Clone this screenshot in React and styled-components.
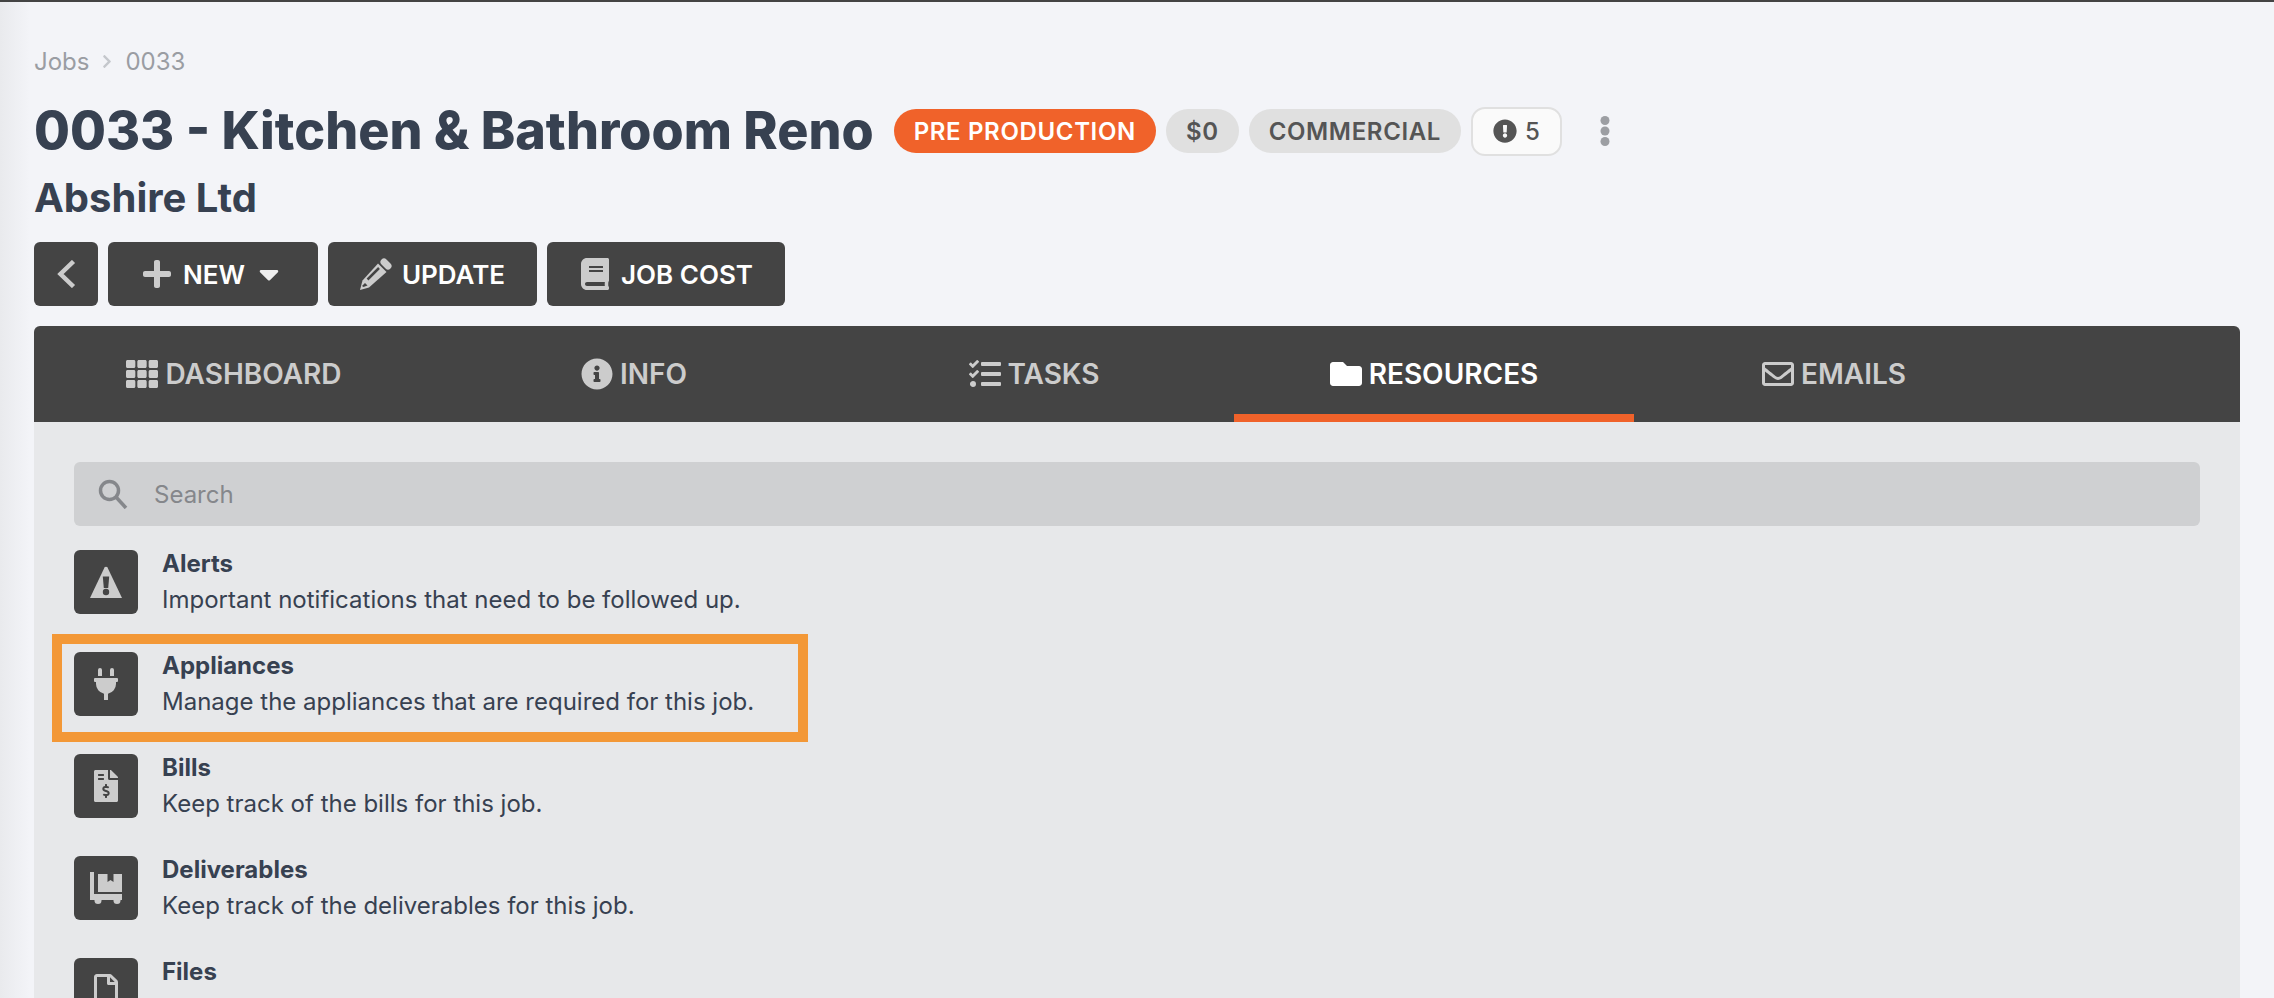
import React from 'react';
import styled, { createGlobalStyle } from 'styled-components';
import {
  FaBook,
  FaCaretDown,
  FaChevronRight,
  FaExclamationCircle,
  FaFileInvoiceDollar,
  FaFolder,
  FaInfoCircle,
  FaPlug,
  FaPlus,
  FaRegEnvelope,
  FaRegFile,
  FaTasks,
  FaTh,
} from 'react-icons/fa';

const GlobalStyle = createGlobalStyle`
  html, body {
    margin: 0;
    padding: 0;
    height: 100%;
    overflow: hidden;
    font-family: Inter, "Liberation Sans", sans-serif;
  }
  * {
    box-sizing: border-box;
  }
`;

const Page = styled.div`
  height: 100vh;
  overflow: hidden;
  border-top: 2px solid #444;
  padding: 0 34px;
  background: linear-gradient(90deg, #e9eaed 0, #f3f4f8 30px) #f3f4f8;
`;

const Breadcrumbs = styled.nav`
  display: flex;
  align-items: center;
  gap: 12px;
  height: 34px;
  margin-top: 42px;
  font-size: 24px;
  color: #9a9da3;

  svg {
    width: 12px;
    height: 15px;
    color: #c4c7cc;
  }
`;

const TitleRow = styled.div`
  display: flex;
  align-items: center;
  margin-top: 22px;
  height: 62px;
`;

const Title = styled.h1`
  margin: 0 20px 0 0;
  font-size: 52px;
  line-height: 62px;
  font-weight: 800;
  color: #374151;
  white-space: nowrap;
`;

const Pill = styled.span`
  display: inline-flex;
  align-items: center;
  height: 44px;
  padding: 0 20px;
  margin-right: 10px;
  border-radius: 22px;
  font-size: 24px;
  font-weight: 600;
  letter-spacing: 0.65px;
  white-space: nowrap;
  color: ${p => (p.$accent ? '#fff' : '#555')};
  background: ${p => (p.$accent ? '#f0622a' : '#e0e0e0')};
`;

const CountPill = styled.span`
  display: inline-flex;
  align-items: center;
  gap: 8px;
  height: 49px;
  padding: 0 20px 0 20px;
  border: 2px solid #e0e0e0;
  border-radius: 14px;
  background: #fafafa;
  font-size: 24px;
  font-weight: 500;
  color: #555;

  svg {
    width: 24px;
    height: 24px;
  }
`;

const MoreButton = styled.span`
  display: flex;
  margin-left: 38px;
  color: #9c9ea3;
`;

const Subtitle = styled.h2`
  margin: 12px 0 0;
  font-size: 40px;
  line-height: 48px;
  font-weight: 700;
  color: #374151;
`;

const Toolbar = styled.div`
  display: flex;
  gap: 10px;
  margin-top: 20px;
`;

const ToolButton = styled.button`
  display: flex;
  align-items: center;
  justify-content: center;
  gap: 10px;
  width: ${p => p.$width}px;
  height: 64px;
  padding: 0;
  border: none;
  border-radius: 6px;
  background: #444;
  color: #fff;
  font-family: inherit;
  font-size: 26px;
  font-weight: 600;

  svg {
    color: #ccc;
    width: 32px;
    height: 32px;
  }

  svg.caret {
    width: 20px;
    height: 32px;
    margin: 0 6px 0 4px;
    color: #eee;
  }

  svg.back {
    width: 19px;
    height: 28px;
  }
`;

const Panel = styled.section`
  margin-top: 20px;
  background: #e7e8ea;
  border-radius: 6px 6px 0 0;
`;

const Tabs = styled.div`
  display: flex;
  height: 96px;
  background: #444;
  border-radius: 6px 6px 0 0;
`;

const Tab = styled.div`
  display: flex;
  align-items: center;
  justify-content: center;
  gap: 7px;
  width: 400px;
  box-shadow: ${p => (p.$active ? 'inset 0 -8px 0 #f0622a' : 'none')};
  font-size: 28px;
  font-weight: 600;
  color: ${p => (p.$active ? '#fff' : '#ccc')};

  svg {
    width: 32px;
    height: 32px;
  }
`;

const PanelBody = styled.div`
  padding: 40px 40px 0;
`;

const SearchBox = styled.div`
  display: flex;
  align-items: center;
  gap: 26px;
  height: 64px;
  padding-left: 24px;
  border-radius: 6px;
  background: #cfd0d2;
  color: #85878b;
  font-size: 24px;
`;

const ResourceList = styled.div`
  display: flex;
  flex-direction: column;
  gap: 38px;
  margin-top: 24px;
`;

const ResourceRow = styled.div`
  position: relative;
  display: flex;
  gap: 24px;
  width: fit-content;
  height: 64px;

  &::after {
    content: ${p => (p.$highlight ? '""' : 'none')};
    position: absolute;
    inset: -18px -54px -26px -22px;
    border: 10px solid #f39837;
    pointer-events: none;
  }
`;

const IconTile = styled.div`
  display: flex;
  align-items: center;
  justify-content: center;
  flex: none;
  width: 64px;
  height: 64px;
  border-radius: 6px;
  background: #444;
  color: #ccc;

  svg {
    width: 32px;
    height: 32px;
  }
`;

const ResourceText = styled.div`
  color: #374151;
  white-space: nowrap;
`;

const ResourceName = styled.div`
  font-size: 24px;
  line-height: 30px;
  font-weight: 700;
  margin-top: -1px;
`;

const ResourceDescription = styled.div`
  font-size: 24px;
  line-height: 30px;
  margin-top: 6px;
`;

function BackIcon() {
  return (
    <svg className="back" viewBox="0 0 19 28" fill="none" stroke="currentColor" strokeWidth="4.5">
      <path d="M16.5 1.5 3.5 14l13 12.5" />
    </svg>
  );
}

function PencilIcon() {
  return (
    <svg viewBox="0 0 32 32">
      <path fill="currentColor" d="M18 5.5 26.5 14 9 29.5 0 32l2.5-9.5z" />
      <path stroke="currentColor" strokeWidth="7" strokeLinecap="round" d="M24 4l4 4" />
      <path stroke="#444" strokeWidth="2.5" d="M7.5 21.5 19 10" />
      <path fill="#444" d="M2 28l3-3 2.5 2.5-4 1.5z" />
    </svg>
  );
}

function KebabIcon() {
  return (
    <svg viewBox="0 0 10 32" width="10" height="32" fill="currentColor">
      <circle cx="5" cy="5.5" r="4.5" />
      <circle cx="5" cy="16" r="4.5" />
      <circle cx="5" cy="26.5" r="4.5" />
    </svg>
  );
}

function SearchIcon() {
  return (
    <svg viewBox="0 0 30 30" width="30" height="30" fill="none" stroke="currentColor" strokeWidth="3.5">
      <circle cx="11.5" cy="11.5" r="9" />
      <path d="M18 18l10 11" />
    </svg>
  );
}

function AlertIcon() {
  return (
    <svg viewBox="0 0 32 32">
      <path fill="currentColor" d="M14.5 1.5a1.8 1.8 0 0 1 3 0L32 32H0z" />
      <path fill="#444" d="M12.8 10.5h6.4l-1 11.5h-4.4z" />
      <circle fill="#444" cx="16" cy="26" r="3.2" />
    </svg>
  );
}

function DollyIcon() {
  return (
    <svg viewBox="0 0 32 32" fill="currentColor">
      <path d="M0 0h4v22h28v6H0z" />
      <path d="M8 2h9.5v8l3-2 3 2V2H32v18H8z" />
      <circle cx="8" cy="28.5" r="3.5" />
      <circle cx="27" cy="28.5" r="3.5" />
    </svg>
  );
}

const tabs = [
  { label: 'DASHBOARD', Icon: FaTh },
  { label: 'INFO', Icon: FaInfoCircle },
  { label: 'TASKS', Icon: FaTasks },
  { label: 'RESOURCES', Icon: FaFolder, active: true },
  { label: 'EMAILS', Icon: FaRegEnvelope },
];

const resources = [
  { name: 'Alerts', text: 'Important notifications that need to be followed up.', Icon: AlertIcon },
  { name: 'Appliances', text: 'Manage the appliances that are required for this job.', Icon: FaPlug, highlight: true },
  { name: 'Bills', text: 'Keep track of the bills for this job.', Icon: FaFileInvoiceDollar },
  { name: 'Deliverables', text: 'Keep track of the deliverables for this job.', Icon: DollyIcon },
  { name: 'Files', text: 'Keep track of the files for this job.', Icon: FaRegFile },
];

export default function App() {
  return (
    <Page>
      <GlobalStyle />
      <Breadcrumbs>
        <span>Jobs</span>
        <FaChevronRight />
        <span>0033</span>
      </Breadcrumbs>

      <TitleRow>
        <Title>0033 - Kitchen &amp; Bathroom Reno</Title>
        <Pill $accent>PRE PRODUCTION</Pill>
        <Pill>$0</Pill>
        <Pill>COMMERCIAL</Pill>
        <CountPill>
          <FaExclamationCircle />5
        </CountPill>
        <MoreButton>
          <KebabIcon />
        </MoreButton>
      </TitleRow>
      <Subtitle>Abshire Ltd</Subtitle>

      <Toolbar>
        <ToolButton $width={64}>
          <BackIcon />
        </ToolButton>
        <ToolButton $width={210}>
          <FaPlus />
          NEW
          <FaCaretDown className="caret" />
        </ToolButton>
        <ToolButton $width={209}>
          <PencilIcon />
          UPDATE
        </ToolButton>
        <ToolButton $width={238}>
          <FaBook />
          JOB COST
        </ToolButton>
      </Toolbar>

      <Panel>
        <Tabs>
          {tabs.map(({ label, Icon, active }) => (
            <Tab key={label} $active={active}>
              <Icon />
              {label}
            </Tab>
          ))}
        </Tabs>
        <PanelBody>
          <SearchBox>
            <SearchIcon />
            Search
          </SearchBox>
          <ResourceList>
            {resources.map(({ name, text, Icon, highlight }) => (
              <ResourceRow key={name} $highlight={highlight}>
                <IconTile>
                  <Icon />
                </IconTile>
                <ResourceText>
                  <ResourceName>{name}</ResourceName>
                  <ResourceDescription>{text}</ResourceDescription>
                </ResourceText>
              </ResourceRow>
            ))}
          </ResourceList>
        </PanelBody>
      </Panel>
    </Page>
  );
}
